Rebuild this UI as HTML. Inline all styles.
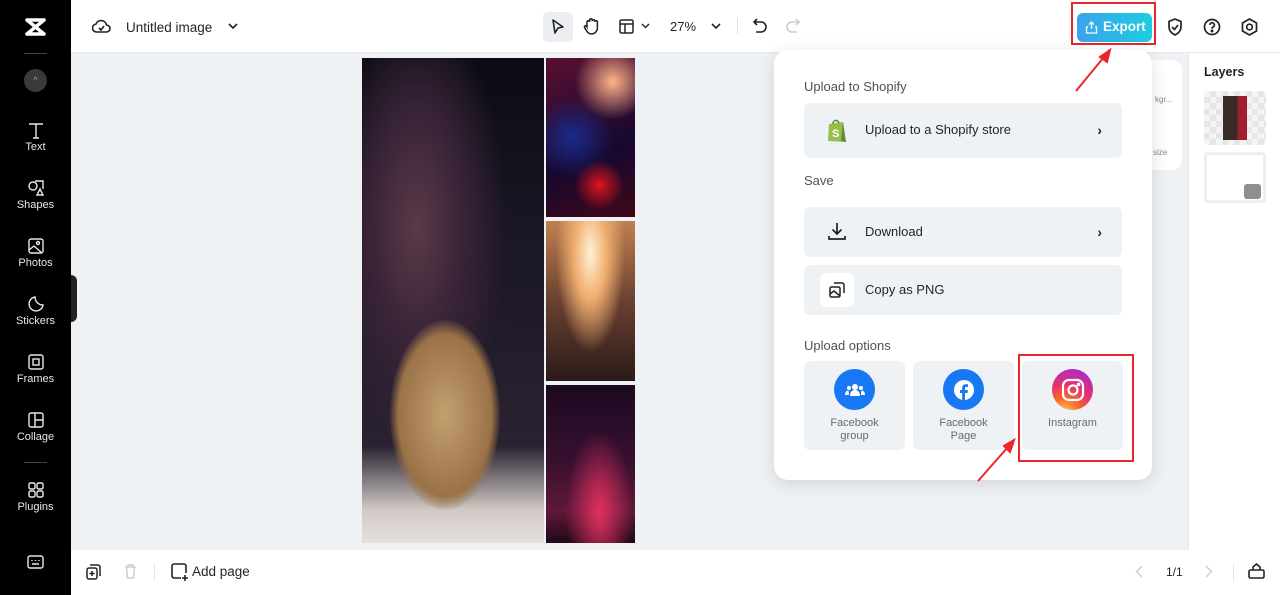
<!DOCTYPE html>
<html><head><meta charset="utf-8"><style>
*{margin:0;padding:0;box-sizing:border-box}
body{width:1280px;height:595px;overflow:hidden;background:#eff2f5;font-family:"Liberation Sans",sans-serif;position:relative;color:#1f2329}
.a{position:absolute}
.side{left:0;top:0;width:71px;height:595px;background:#000}
.si{position:absolute;left:0;width:71px;text-align:center;color:#e8e8e8;font-size:11px}
.si svg{display:block;margin:0 auto 2px}
.top{left:71px;top:0;width:1209px;height:53px;background:#fff;border-bottom:1px solid #e6e8eb}
.bot{left:71px;top:550px;width:1209px;height:45px;background:#fff}
.rp{left:1188px;top:53px;width:92px;height:497px;background:#fff;border-left:1px solid #e6e8eb}
.pop{left:774px;top:50px;width:378px;height:430px;background:#fff;border-radius:14px;box-shadow:0 4px 18px rgba(0,0,0,.13)}
.lbl{position:absolute;left:30px;font-size:13px;color:#4e5156}
.row{position:absolute;left:30px;width:318px;height:50px;background:#eff2f5;border-radius:6px;font-size:13px;color:#1f2329}
.row span{position:absolute;left:61px;top:17px}
.row .ch{position:absolute;right:20px;top:17px;font-size:14px;font-weight:bold;left:auto}
.op{position:absolute;top:311px;width:101px;height:89px;background:#eff2f5;border-radius:6px;text-align:center;font-size:11px;color:#646a73;line-height:13px}
.op .c{width:41px;height:41px;border-radius:50%;margin:8px auto 7px;background:#1877f2;display:flex;align-items:center;justify-content:center}
.red{position:absolute;border:2px solid #e8262c}
</style></head><body>
<div class="a side">
 <svg class="a" style="left:23px;top:16px" width="25" height="22" viewBox="0 0 25 22"><path d="M4 4h17M4 18h17M4 4l17 14M21 4L4 18" stroke="#fff" stroke-width="3.5" fill="none" stroke-linecap="round" stroke-linejoin="round"/></svg>
 <div class="a" style="left:24px;top:53px;width:23px;height:1px;background:#444"></div>
 <div class="a" style="left:24px;top:69px;width:23px;height:23px;border-radius:50%;background:#3a3a3c;color:#aaa;font-size:9px;text-align:center;line-height:23px">^</div>
 <div class="si" style="top:121px"><svg width="18" height="18" viewBox="0 0 18 18"><path d="M2 3h14M9 3v14M6 17h6" stroke="#e8e8e8" stroke-width="1.4" fill="none"/></svg>Text</div>
 <div class="si" style="top:179px"><svg width="18" height="18" viewBox="0 0 18 18" fill="none" stroke="#e8e8e8" stroke-width="1.4"><circle cx="6" cy="7" r="4"/><path d="M8 2h8v8M10 16l3-6 3 6z"/></svg>Shapes</div>
 <div class="si" style="top:237px"><svg width="18" height="18" viewBox="0 0 18 18" fill="none" stroke="#e8e8e8" stroke-width="1.4"><rect x="2" y="2" width="14" height="14" rx="2"/><path d="M2 13l5-4 8 7"/><circle cx="11" cy="6" r="1.5"/></svg>Photos</div>
 <div class="si" style="top:295px"><svg width="18" height="18" viewBox="0 0 18 18" fill="none" stroke="#e8e8e8" stroke-width="1.4"><path d="M16 10A7 7 0 1 1 8 2c0 4 3 8 8 8z"/></svg>Stickers</div>
 <div class="si" style="top:353px"><svg width="18" height="18" viewBox="0 0 18 18" fill="none" stroke="#e8e8e8" stroke-width="1.4"><rect x="2" y="2" width="14" height="14" rx="2"/><rect x="6" y="6" width="6" height="6"/></svg>Frames</div>
 <div class="si" style="top:411px"><svg width="18" height="18" viewBox="0 0 18 18" fill="none" stroke="#e8e8e8" stroke-width="1.4"><rect x="2" y="2" width="14" height="14" rx="2"/><path d="M8 2v14M8 9h8"/></svg>Collage</div>
 <div class="a" style="left:24px;top:462px;width:23px;height:1px;background:#444"></div>
 <div class="si" style="top:481px"><svg width="18" height="18" viewBox="0 0 18 18" fill="none" stroke="#e8e8e8" stroke-width="1.4"><rect x="2" y="2" width="6" height="6" rx="1.5"/><rect x="10" y="2" width="6" height="6" rx="1.5"/><rect x="2" y="10" width="6" height="6" rx="1.5"/><rect x="10" y="10" width="6" height="6" rx="1.5"/></svg>Plugins</div>
 <svg class="a" style="left:27px;top:555px" width="17" height="14" viewBox="0 0 17 14" fill="none" stroke="#e8e8e8" stroke-width="1.4"><rect x="1" y="1" width="15" height="12" rx="2"/><path d="M5 5v1M8.5 5v1M12 5v1M5 9h7"/></svg>
</div>
<div class="a" style="left:71px;top:275px;width:6px;height:47px;background:#222;border-radius:0 6px 6px 0"></div>
<div class="a top">
 <svg class="a" style="left:21px;top:18px" width="19" height="16" viewBox="0 0 19 16" fill="none" stroke="#1f2329" stroke-width="1.6"><path d="M5 14a4 4 0 0 1-1-8 5.5 5.5 0 0 1 10.5 1 3.5 3.5 0 0 1 0 7z"/><path d="M7 10l2 2 3-4"/></svg>
 <div class="a" style="left:55px;top:20px;font-size:13.5px">Untitled image</div>
 <svg class="a" style="left:157px;top:23px" width="10" height="7" viewBox="0 0 10 7"><path d="M1 1l4 4 4-4" stroke="#1f2329" stroke-width="1.6" fill="none"/></svg>
 <div class="a" style="left:472px;top:12px;width:30px;height:30px;background:#eceef1;border-radius:5px"></div>
 <svg class="a" style="left:480px;top:18px" width="14" height="17" viewBox="0 0 14 17"><path d="M2 2l10 7-5 1-3 5z" stroke="#1f2329" stroke-width="1.6" fill="none" stroke-linejoin="round"/></svg>
 <svg class="a" style="left:512px;top:17px" width="16" height="18" viewBox="0 0 16 18" fill="none" stroke="#1f2329" stroke-width="1.5"><path d="M4 10V5a1.3 1.3 0 0 1 2.6 0V3a1.3 1.3 0 0 1 2.6 0v1a1.3 1.3 0 0 1 2.6 0v1a1.3 1.3 0 0 1 2.6 0v6a6 6 0 0 1-6 6c-3 0-4-2-6-5l-1-2a1.2 1.2 0 0 1 2-1z"/></svg>
 <svg class="a" style="left:548px;top:19px" width="15" height="15" viewBox="0 0 15 15" fill="none" stroke="#1f2329" stroke-width="1.5"><rect x="1" y="1" width="13" height="13" rx="1.5"/><path d="M1 5h13M6 5v9"/></svg>
 <svg class="a" style="left:570px;top:23px" width="9" height="6" viewBox="0 0 9 6"><path d="M1 1l3.5 3.5L8 1" stroke="#1f2329" stroke-width="1.4" fill="none"/></svg>
 <div class="a" style="left:599px;top:19px;font-size:13px">27%</div>
 <svg class="a" style="left:640px;top:23px" width="10" height="7" viewBox="0 0 10 7"><path d="M1 1l4 4 4-4" stroke="#1f2329" stroke-width="1.6" fill="none"/></svg>
 <div class="a" style="left:666px;top:18px;width:1px;height:16px;background:#e0e2e5"></div>
 <svg class="a" style="left:682px;top:18px" width="14" height="15" viewBox="0 0 14 15" fill="none" stroke="#1f2329" stroke-width="1.6"><path d="M4 1L1 4l3 3M1 4h7a5 5 0 0 1 0 10H3"/></svg>
 <svg class="a" style="left:715px;top:18px" width="14" height="15" viewBox="0 0 14 15" fill="none" stroke="#c9cdd4" stroke-width="1.6"><path d="M10 1l3 3-3 3M13 4H6a5 5 0 0 0 0 10h5"/></svg>
 <div class="a" style="left:1006px;top:13px;width:75px;height:29px;border-radius:6px;background:linear-gradient(90deg,#3aa3ec,#1ccde0)"></div>
 <svg class="a" style="left:1014px;top:20px" width="13" height="14" viewBox="0 0 13 14" fill="none" stroke="#fff" stroke-width="1.3"><path d="M6.5 9V2M4 4.5l2.5-2.5L9 4.5M3 7H1.5v6h10V7H10"/></svg>
 <div class="a" style="left:1032px;top:19px;color:#fff;font-weight:bold;font-size:13.5px">Export</div>
 <div class="red" style="left:1000px;top:2px;width:85px;height:43px"></div>
 <svg class="a" style="left:1096px;top:18px" width="16" height="18" viewBox="0 0 16 18" fill="none" stroke="#1f2329" stroke-width="1.7"><path d="M8 1l6 2.5V9c0 4-3 6.5-6 8-3-1.5-6-4-6-8V3.5z"/><path d="M5 9l2.5 2.5L11 7"/></svg>
 <svg class="a" style="left:1132px;top:18px" width="18" height="18" viewBox="0 0 18 18" fill="none" stroke="#1f2329" stroke-width="1.7"><circle cx="9" cy="9" r="7.5"/><path d="M6.8 7a2.3 2.3 0 1 1 3 2.2c-.7.3-.8.8-.8 1.5"/><circle cx="9" cy="13" r=".6" fill="#1f2329"/></svg>
 <svg class="a" style="left:1170px;top:18px" width="17" height="18" viewBox="0 0 17 18" fill="none" stroke="#1f2329" stroke-width="1.7"><path d="M8.5 1l7 4v8l-7 4-7-4V5z"/><circle cx="8.5" cy="9" r="2.8"/></svg>
</div>
<!-- canvas images -->
<div class="a" style="left:362px;top:58px;width:182px;height:485px;background:radial-gradient(ellipse at 30% 35%,#5a3a48 0,#3a2438 25%,transparent 50%),radial-gradient(ellipse at 15% 38%,#b08060 0,transparent 12%),linear-gradient(180deg,#0b0b14 0%,#1a1624 35%,#2a2230 80%,#cfc8c4 93%,#e6e0dc 100%)"></div>
<div class="a" style="left:390px;top:320px;width:110px;height:190px;border-radius:50%;background:radial-gradient(ellipse,#c4a070 0,#9a7248 60%,transparent 72%)"></div>
<div class="a" style="left:546px;top:58px;width:89px;height:159px;background:radial-gradient(circle at 75% 15%,#ffb48a 0,transparent 25%),radial-gradient(circle at 60% 80%,#e0141e 0,transparent 18%),radial-gradient(circle at 30% 50%,#1a2a8a 0,transparent 40%),linear-gradient(160deg,#5a1030,#150830 60%,#400818)"></div>
<div class="a" style="left:546px;top:221px;width:89px;height:160px;background:radial-gradient(ellipse at 50% 20%,#fff2d8 0,#f0b070 25%,transparent 55%),linear-gradient(180deg,#c08050,#6a4030 50%,#2a1a18)"></div>
<div class="a" style="left:546px;top:385px;width:89px;height:158px;background:radial-gradient(ellipse at 60% 80%,#e03060 0,transparent 45%),linear-gradient(180deg,#1a0a20,#3a1030 50%,#601838 80%,#200818)"></div>
<!-- partly hidden panel -->
<div class="a" style="left:1130px;top:60px;width:52px;height:110px;background:#fff;border-radius:10px"></div>
<div class="a" style="left:1155px;top:95px;font-size:8px;color:#888">kgr...</div>
<div class="a" style="left:1153px;top:148px;font-size:8px;color:#888">size</div>
<div class="a rp">
 <div class="a" style="left:15px;top:12px;font-size:12.5px;font-weight:bold">Layers</div>
 <div class="a" style="left:15px;top:38px;width:62px;height:54px;border-radius:4px;background:repeating-conic-gradient(#e6e6e6 0 25%,#f4f4f4 0 50%) 0 0/12px 12px"></div>
 <div class="a" style="left:34px;top:43px;width:24px;height:44px;background:linear-gradient(90deg,#3a2a28 60%,#a02030 60%)"></div>
 <div class="a" style="left:15px;top:99px;width:62px;height:51px;border-radius:4px;border:3px solid #eceef1;background:#fff"></div>
 <div class="a" style="left:55px;top:131px;width:17px;height:15px;border-radius:3px;background:#8f8f8f"></div>
</div>
<div class="a bot">
 <svg class="a" style="left:15px;top:14px" width="15" height="16" viewBox="0 0 15 16" fill="none" stroke="#1f2329" stroke-width="1.5"><rect x="1" y="4" width="10" height="11" rx="2"/><path d="M4 1h8a2 2 0 0 1 2 2v9M6 7v5M3.5 9.5h5"/></svg>
 <svg class="a" style="left:53px;top:14px" width="13" height="15" viewBox="0 0 13 15" fill="none" stroke="#c9cdd4" stroke-width="1.4"><path d="M1 3h11M4 3V1h5v2M2.5 3l1 11h6l1-11"/></svg>
 <div class="a" style="left:83px;top:13px;width:1px;height:18px;background:#e0e2e5"></div>
 <svg class="a" style="left:100px;top:13px" width="17" height="18" viewBox="0 0 17 18" fill="none" stroke="#1f2329" stroke-width="1.6"><path d="M10 15H3a2 2 0 0 1-2-2V3a2 2 0 0 1 2-2h10a2 2 0 0 1 2 2v7M14 12v6M11 15h6"/></svg>
 <div class="a" style="left:121px;top:14px;font-size:13.5px">Add page</div>
 <svg class="a" style="left:1064px;top:15px" width="8" height="13" viewBox="0 0 8 13"><path d="M7 1L1.5 6.5 7 12" stroke="#c9cdd4" stroke-width="1.4" fill="none"/></svg>
 <div class="a" style="left:1095px;top:15px;font-size:12px">1/1</div>
 <svg class="a" style="left:1134px;top:15px" width="8" height="13" viewBox="0 0 8 13"><path d="M1 1l5.5 5.5L1 12" stroke="#c9cdd4" stroke-width="1.4" fill="none"/></svg>
 <div class="a" style="left:1162px;top:14px;width:1px;height:17px;background:#e0e2e5"></div>
 <svg class="a" style="left:1177px;top:13px" width="17" height="16" viewBox="0 0 17 16" fill="none" stroke="#1f2329" stroke-width="1.6"><rect x="1" y="7" width="15" height="8" rx="1.5"/><path d="M5 7V4l3.5-3L12 4v3"/></svg>
</div>
<div class="a pop">
 <div class="lbl" style="top:29px">Upload to Shopify</div>
 <div class="row" style="top:53px;height:55px">
  <svg class="a" style="left:22px;top:15px" width="22" height="25" viewBox="0 0 22 25"><path d="M3 6l14-2 3 20-18-1z" fill="#95bf47"/><path d="M7 6c0-4 4-5 6-1" stroke="#5e8e3e" stroke-width="1.5" fill="none"/><path d="M17 4l3 20-5-1z" fill="#5e8e3e"/><text x="6" y="19" font-size="11" font-weight="bold" fill="#fff" font-family="Liberation Sans">S</text></svg>
  <span style="top:19px">Upload to a Shopify store</span><span class="ch" style="top:19px">›</span>
 </div>
 <div class="lbl" style="top:123px">Save</div>
 <div class="row" style="top:157px">
  <svg class="a" style="left:24px;top:15px" width="18" height="19" viewBox="0 0 18 19" fill="none" stroke="#1f2329" stroke-width="1.7"><path d="M9 1v11M4.5 7.5L9 12l4.5-4.5M1 14v3h16v-3"/></svg>
  <span>Download</span><span class="ch">›</span>
 </div>
 <div class="row" style="top:215px">
  <div class="a" style="left:16px;top:8px;width:34px;height:34px;background:#fff;border-radius:6px"></div>
  <svg class="a" style="left:25px;top:17px" width="16" height="16" viewBox="0 0 16 16" fill="none" stroke="#1f2329" stroke-width="1.5"><rect x="1" y="5" width="10" height="10" rx="1.5"/><path d="M5 1h8a2 2 0 0 1 2 2v8M1 12l4-3 6 5"/></svg>
  <span>Copy as PNG</span>
 </div>
 <div class="lbl" style="top:288px">Upload options</div>
 <div class="op" style="left:30px"><div class="c"><svg width="20" height="14" viewBox="0 0 20 14" fill="#fff"><circle cx="10" cy="4" r="3"/><circle cx="4" cy="5" r="2"/><circle cx="16" cy="5" r="2"/><path d="M5 13c0-4 2-6 5-6s5 2 5 6zM0 12c0-3 1.5-4.5 3.5-4.5L4 12zM20 12c0-3-1.5-4.5-3.5-4.5L16 12z"/></svg></div>Facebook<br>group</div>
 <div class="op" style="left:139px"><div class="c"><svg width="22" height="22" viewBox="0 0 22 22"><circle cx="11" cy="11" r="10" fill="#fff"/><path d="M12 21v-7h2.5l.4-3H12V9.3c0-.9.3-1.4 1.5-1.4H15V5.3c-.3 0-1.2-.1-2.2-.1-2.2 0-3.6 1.3-3.6 3.7V11H7v3h2.2v7z" fill="#1877f2"/></svg></div>Facebook<br>Page</div>
 <div class="op" style="left:248px"><div class="c" style="background:radial-gradient(circle at 30% 110%,#fdd35a 0,#f66a2c 30%,#e6306a 55%,#b02cc4 85%,#7a3be0 100%)"><svg width="24" height="24" viewBox="0 0 24 24" fill="none" stroke="#fff" stroke-width="2.2"><rect x="2" y="2" width="20" height="20" rx="6"/><circle cx="12" cy="12" r="4.5"/><circle cx="17.5" cy="6.5" r=".8" fill="#fff"/></svg></div>Instagram</div>
</div>
<div class="red" style="left:1018px;top:354px;width:116px;height:108px"></div>
<svg class="a" style="left:0;top:0" width="1280" height="595" viewBox="0 0 1280 595"><g stroke="#e8262c" stroke-width="2" fill="#e8262c"><path d="M1076 91L1104 57"/><path d="M1110 50l-3 12-7-5z"/><path d="M978 481l30-34"/><path d="M1014 440l-4 12-6-6z"/></g></svg>
</body></html>
